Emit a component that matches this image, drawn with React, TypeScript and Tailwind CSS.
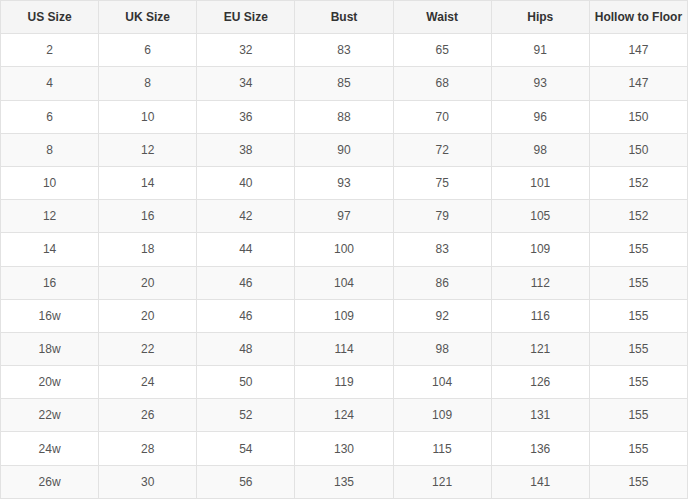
import React from "react";

const headers = ["US Size", "UK Size", "EU Size", "Bust", "Waist", "Hips", "Hollow to Floor"];
const rows: string[][] = [
  ["2", "6", "32", "83", "65", "91", "147"],
  ["4", "8", "34", "85", "68", "93", "147"],
  ["6", "10", "36", "88", "70", "96", "150"],
  ["8", "12", "38", "90", "72", "98", "150"],
  ["10", "14", "40", "93", "75", "101", "152"],
  ["12", "16", "42", "97", "79", "105", "152"],
  ["14", "18", "44", "100", "83", "109", "155"],
  ["16", "20", "46", "104", "86", "112", "155"],
  ["16w", "20", "46", "109", "92", "116", "155"],
  ["18w", "22", "48", "114", "98", "121", "155"],
  ["20w", "24", "50", "119", "104", "126", "155"],
  ["22w", "26", "52", "124", "109", "131", "155"],
  ["24w", "28", "54", "130", "115", "136", "155"],
  ["26w", "30", "56", "135", "121", "141", "155"],
];

export default function App() {
  return (
    <div className="w-[692px] h-[503px] bg-white" style={{ fontFamily: '"Liberation Sans", Arial, sans-serif' }}>
      <table className="w-[688px] border-collapse table-fixed text-[12px]">
        <thead>
          <tr className="bg-[#f5f5f5]">
            {headers.map((h) => (
              <th key={h} className="h-[33.2px] border border-[#e2e2e2] font-bold text-[#333] text-center p-0">
                {h}
              </th>
            ))}
          </tr>
        </thead>
        <tbody>
          {rows.map((r, i) => (
            <tr key={i} className={i % 2 === 1 ? "bg-[#f9f9f9]" : "bg-white"}>
              {r.map((c, j) => (
                <td key={j} className="h-[33.2px] border border-[#e2e2e2] text-[#555] text-center p-0">
                  {c}
                </td>
              ))}
            </tr>
          ))}
        </tbody>
      </table>
    </div>
  );
}
